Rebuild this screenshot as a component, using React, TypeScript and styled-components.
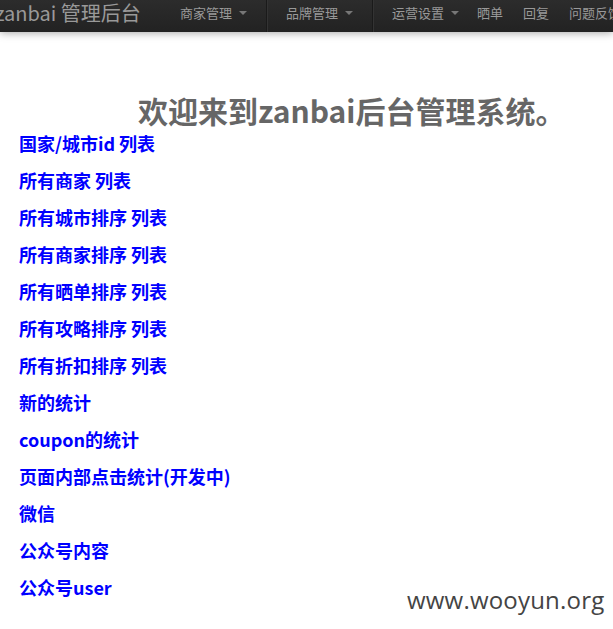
import React from "react";
import styled, { createGlobalStyle } from "styled-components";

const Global = createGlobalStyle`
  html, body { margin: 0; padding: 0; background: #fff; overflow: hidden; }
  body { font-family: "Noto Sans CJK SC", "Noto Sans", sans-serif; }
`;

const Navbar = styled.div`
  height: 32px;
  box-sizing: border-box;
  padding-bottom: 7px;
  background: linear-gradient(#2c2c2c, #222);
  box-shadow: 0 1px 8px rgba(0,0,0,0.35);
  display: flex;
  align-items: center;
  white-space: nowrap;
  overflow: hidden;
`;

const Brand = styled.div`
  color: #999;
  font-size: 20px;
  margin-left: -5px;
  width: 179px;
  flex: none;
  line-height: 26px;
`;

const NavItem = styled.div<{ $w: number }>`
  color: #999;
  font-size: 13px;
  line-height: 18px;
  width: ${p => p.$w}px;
  flex: none;
  display: flex;
  align-items: center;
  gap: 7px;
  padding-left: 6px;
  box-sizing: border-box;
`;

const Caret = styled.span`
  width: 0; height: 0;
  border-left: 4px solid transparent;
  border-right: 4px solid transparent;
  border-top: 4px solid #777;
  margin-top: 1px;
`;

const Divider = styled.div`
  width: 1px;
  height: 32px;
  margin-bottom: -7px;
  background: #1a1a1a;
  border-right: 1px solid #333;
  flex: none;
  margin-right: 12px;
`;

const Main = styled.div`
  position: relative;
  height: 597px;
`;

const Heading = styled.h1`
  margin: 0;
  padding: 57px 0 0 138px;
  font-size: 30px;
  line-height: 42px;
  font-weight: bold;
  color: #666;
  white-space: nowrap;
`;

const List = styled.div`
  display: flex;
  flex-direction: column;
  padding-left: 19px;
  margin-top: -6px;
`;

const Link = styled.a`
  color: #0000ff;
  font-weight: bold;
  font-size: 18px;
  line-height: 37px;
  text-decoration: none;
`;

const Watermark = styled.div`
  position: absolute;
  left: 407px;
  top: 551px;
  font-family: "Open Sans", "Noto Sans", sans-serif;
  font-size: 24px;
  color: #444;
  letter-spacing: 0.2px;
`;

const links = [
  "国家/城市id 列表",
  "所有商家 列表",
  "所有城市排序 列表",
  "所有商家排序 列表",
  "所有晒单排序 列表",
  "所有攻略排序 列表",
  "所有折扣排序 列表",
  "新的统计",
  "coupon的统计",
  "页面内部点击统计(开发中)",
  "微信",
  "公众号内容",
  "公众号user",
];

export default function App() {
  return (
    <>
      <Global />
      <Navbar>
        <Brand>zanbai 管理后台</Brand>
        <NavItem $w={92}>商家管理<Caret /></NavItem>
        <Divider />
        <NavItem $w={92}>品牌管理<Caret /></NavItem>
        <Divider />
        <NavItem $w={85}>运营设置<Caret /></NavItem>
        <NavItem $w={46}>晒单</NavItem>
        <NavItem $w={46}>回复</NavItem>
        <NavItem $w={80}>问题反馈</NavItem>
      </Navbar>
      <Main>
        <Heading>欢迎来到zanbai后台管理系统。</Heading>
        <List>
          {links.map(l => (
            <Link key={l} href="#">{l}</Link>
          ))}
        </List>
        <Watermark>www.wooyun.org</Watermark>
      </Main>
    </>
  );
}
